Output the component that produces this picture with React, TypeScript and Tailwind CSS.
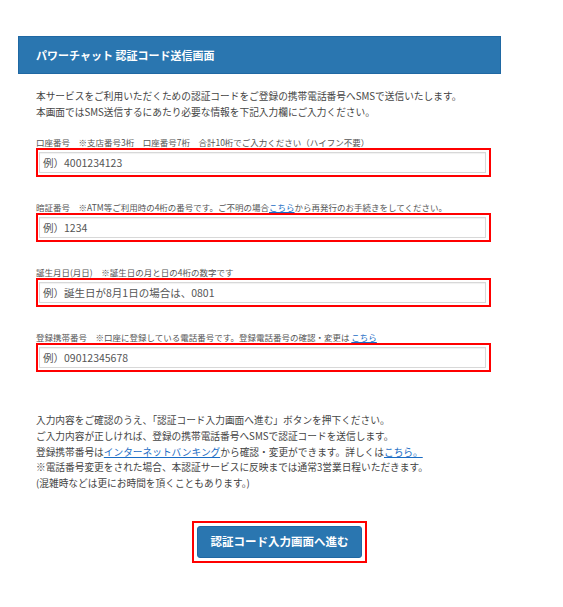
const jp = { fontFamily: '"Noto Sans CJK JP", "Noto Sans", sans-serif' };

type Field = {
  label: React.ReactNode;
  placeholder: string;
};

const fields: Field[] = [
  {
    label: "口座番号　※支店番号3桁　口座番号7桁　合計10桁でご入力ください（ハイフン不要）",
    placeholder: "例）4001234123",
  },
  {
    label: (
      <>
        暗証番号　※ATM等ご利用時の4桁の番号です。ご不明の場合
        <span className="text-[#1a6cc4] underline">こちら</span>
        から再発行のお手続きをしてください。
      </>
    ),
    placeholder: "例）1234",
  },
  {
    label: "誕生月日(月日)　※誕生日の月と日の4桁の数字です",
    placeholder: "例）誕生日が8月1日の場合は、0801",
  },
  {
    label: (
      <>
        登録携帯番号　※口座に登録している電話番号です。登録電話番号の確認・変更は{" "}
        <span className="text-[#1a6cc4] underline">こちら</span>
      </>
    ),
    placeholder: "例）09012345678",
  },
];

function InputField({ field }: { field: Field }) {
  return (
    <div>
      <div className="h-[12px] text-[8.5px] leading-[12px] text-[#555] whitespace-nowrap">
        {field.label}
      </div>
      <div className="h-[29px] border-2 border-[#f00] pt-[2px] pb-[2px] pl-[1px] pr-[3px]">
        <div className="flex h-full items-center border border-[#d8d8d8] bg-white pl-[3px] text-[10.5px] text-[#555] shadow-[inset_0_1px_1px_rgba(0,0,0,0.06)]">
          {field.placeholder}
        </div>
      </div>
    </div>
  );
}

export default function App() {
  return (
    <div className="min-h-[607px] bg-white pt-[36px]" style={jp}>
      <div className="w-[483px] ml-[18px]">
        <div className="flex h-[38px] items-center border border-[#1f68a3] bg-[#2a76b0] pl-[17px] text-[11px] font-bold text-white">
          パワーチャット 認証コード送信画面
        </div>
        <div className="pl-[18px] pr-[10px] pt-[14px]">
          <p className="text-[9.7px] leading-[16px] text-[#444]">
            本サービスをご利用いただくための認証コードをご登録の携帯電話番号へSMSで送信いたします。
            <br />
            本画面ではSMS送信するにあたり必要な情報を下記入力欄にご入力ください。
          </p>
          <div className="mt-[16px] flex flex-col gap-[24px]">
            {fields.map((f, i) => (
              <InputField key={i} field={f} />
            ))}
          </div>
          <p className="mt-[41px] text-[9.7px] leading-[15.8px] text-[#444]">
            入力内容をご確認のうえ、「認証コード入力画面へ進む」ボタンを押下ください。
            <br />
            ご入力内容が正しければ、登録の携帯電話番号へSMSで認証コードを送信します。
            <br />
            登録携帯番号は
            <span className="text-[#1a6cc4] underline">インターネットバンキング</span>
            から確認・変更ができます。詳しくは
            <span className="text-[#1a6cc4] underline">こちら。 </span>
            <br />
            ※電話番号変更をされた場合、本認証サービスに反映までは通常3営業日程いただきます。
            <br />
            (混雑時などは更にお時間を頂くこともあります。)
          </p>
          <div className="mt-[29px] ml-[156px] w-[175px] border-2 border-[#f00] p-[3px]">
            <button className="flex h-[32px] w-full items-center justify-center rounded-[3px] border border-[#1f68a3] bg-[#2a76b0] text-[11.5px] font-bold text-white">
              認証コード入力画面へ進む
            </button>
          </div>
        </div>
      </div>
    </div>
  );
}
